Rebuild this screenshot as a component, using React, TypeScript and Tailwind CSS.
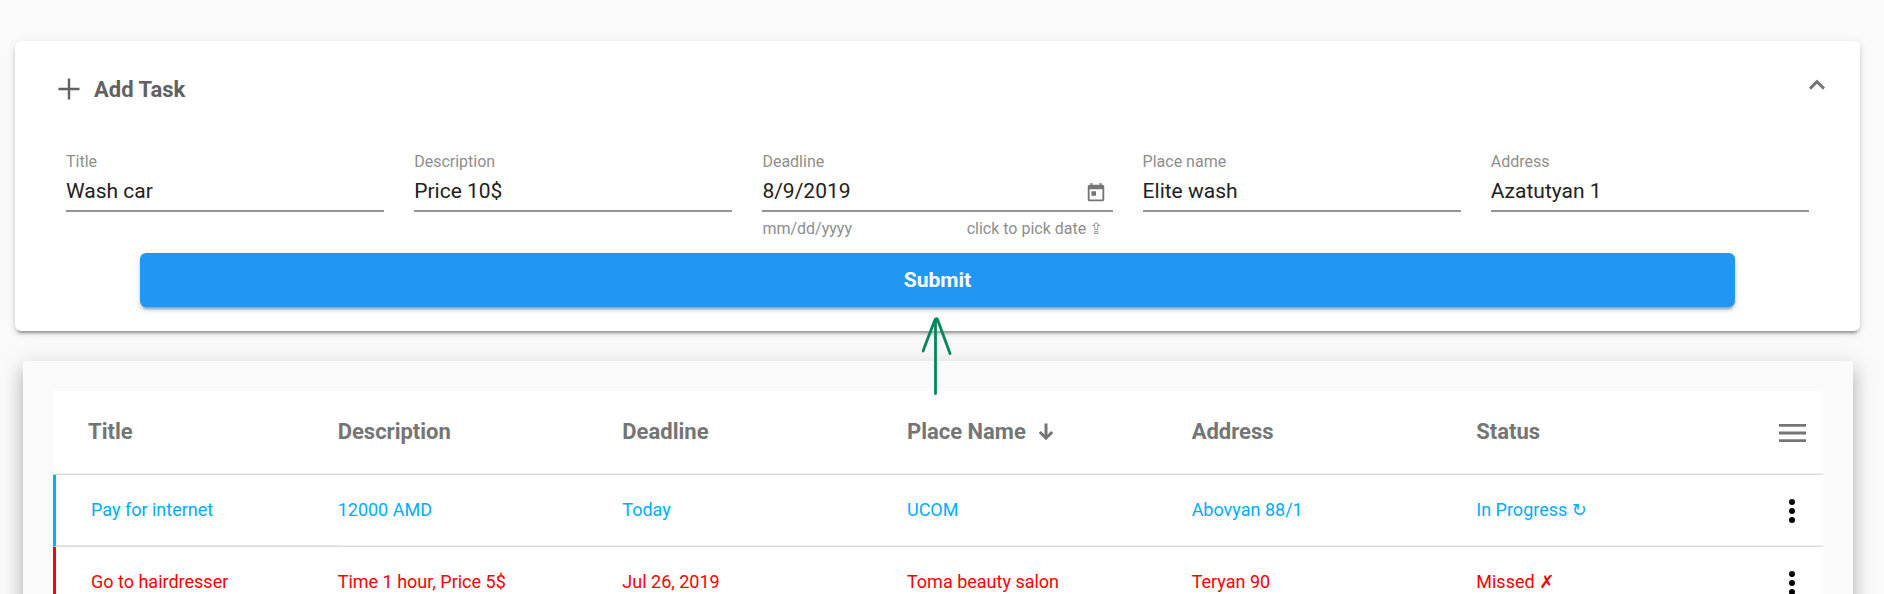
import type { ReactNode } from "react";
import { MdToday } from "react-icons/md";

type Tone = "progress" | "missed";

interface Task {
  title: string;
  description: string;
  deadline: string;
  place: string;
  address: string;
  status: string;
  mark: string;
  tone: Tone;
}

const tasks: Task[] = [
  {
    title: "Pay for internet",
    description: "12000 AMD",
    deadline: "Today",
    place: "UCOM",
    address: "Abovyan 88/1",
    status: "In Progress",
    mark: "↻",
    tone: "progress",
  },
  {
    title: "Go to hairdresser",
    description: "Time 1 hour, Price 5$",
    deadline: "Jul 26, 2019",
    place: "Toma beauty salon",
    address: "Teryan 90",
    status: "Missed",
    mark: "✗",
    tone: "missed",
  },
];

const toneText: Record<Tone, string> = {
  progress: "text-[#00adff]",
  missed: "text-[#ff0000]",
};

const toneEdge: Record<Tone, string> = {
  progress: "border-l-[#00b0ff]",
  missed: "border-l-[#ff0000]",
};

const markWeight: Record<Tone, string> = {
  progress: "font-normal",
  missed: "font-bold",
};

interface FieldProps {
  id: string;
  label: string;
  value: string;
  action?: ReactNode;
  hint?: ReactNode;
}

function Field({ id, label, value, action, hint }: FieldProps) {
  return (
    <div className="min-w-0">
      <label htmlFor={id} className="block text-[16px] leading-5 text-[#8e8e8e]">
        {label}
      </label>
      <div className="flex h-10 items-center border-b-2 border-[#949494]">
        <input
          id={id}
          type="text"
          defaultValue={value}
          className="w-full min-w-0 bg-transparent text-[21px] leading-6 text-[#212121] outline-none"
        />
        {action}
      </div>
      {hint}
    </div>
  );
}

function AddTaskCard() {
  return (
    <section className="relative rounded-md bg-white px-[51px] pb-6 pt-[34px] shadow-[0_5px_2px_-3px_rgba(0,0,0,0.2),0_3px_3px_0_rgba(0,0,0,0.14),0_2px_8px_0_rgba(0,0,0,0.12)]">
      <header className="-ml-2 -mr-4 flex h-7 items-center justify-between">
        <h2 className="flex items-center gap-3.5 text-[22px] font-bold text-[#616161]">
          <svg viewBox="0 0 22 22" className="size-[22px]" fill="none" stroke="#616161" strokeWidth="2.4" aria-hidden="true">
            <path d="M11 0.5V21.5M0.5 11H21.5" />
          </svg>
          Add Task
        </h2>
        <button type="button" aria-label="Collapse" className="-mt-2.5">
          <svg viewBox="0 0 16 11" className="h-[11px] w-4" fill="none" stroke="#757575" strokeWidth="3" aria-hidden="true">
            <path d="M1 9.6L8 2.6L15 9.6" />
          </svg>
        </button>
      </header>

      <form onSubmit={(event) => event.preventDefault()}>
        <div className="mt-[49px] grid grid-cols-[318fr_318fr_350fr_318fr_318fr] gap-x-[30px]">
          <Field id="title" label="Title" value="Wash car" />
          <Field id="description" label="Description" value="Price 10$" />
          <Field
            id="deadline"
            label="Deadline"
            value="8/9/2019"
            action={
              <button type="button" aria-label="Pick date" className="mr-1.5 pt-1 text-[#757575]">
                <MdToday size={22} />
              </button>
            }
            hint={
              <div className="mt-[7px] flex h-5 justify-between pr-2.5 text-[16px] leading-5 text-[#8e8e8e]">
                <span>mm/dd/yyyy</span>
                <span className="flex gap-[3px]">
                  click to pick date <span>⇪</span>
                </span>
              </div>
            }
          />
          <Field id="place" label="Place name" value="Elite wash" />
          <Field id="address" label="Address" value="Azatutyan 1" />
        </div>

        <div className="relative mx-[74px] mt-3.5">
          <button
            type="submit"
            className="h-[54px] w-full rounded-md bg-[#2196f3] pt-0.5 text-[21px] font-bold text-white shadow-[0_5px_2px_-3px_rgba(0,0,0,0.2),0_3px_3px_0_rgba(0,0,0,0.14),0_2px_8px_0_rgba(0,0,0,0.12)]"
          >
            Submit
          </button>
          <svg
            viewBox="0 0 32 80"
            className="pointer-events-none absolute left-1/2 top-full z-10 mt-2 h-20 w-8 -translate-x-1/2"
            fill="none"
            stroke="#00875a"
            strokeWidth="2.8"
            strokeLinecap="round"
            strokeLinejoin="round"
            aria-hidden="true"
          >
            <path d="M13.500 78.500V5" />
            <path d="M1 36L12.500 6Q14 2.500 15.500 4.500L28 38.500" />
          </svg>
        </div>
      </form>
    </section>
  );
}

const line = "border-b border-b-[#dedede] shadow-[inset_0_-1px_#efefef]";

function TaskTable() {
  return (
    <section className="ml-2 mr-[7px] mt-[30px] bg-[#fafafa] p-[30px] shadow-[0_8px_8px_-5px_rgba(0,0,0,0.2),0_12px_15px_2px_rgba(0,0,0,0.14),0_5px_21px_3px_rgba(0,0,0,0.12)]">
      <table className="w-full table-fixed border-separate border-spacing-0 bg-white text-left">
        <colgroup>
          <col />
          <col />
          <col />
          <col />
          <col />
          <col />
          <col className="w-[62px]" />
        </colgroup>
        <thead>
          <tr className="h-[84px] text-[22px] text-[#757575]">
            <th className={`${line} pb-0.5 pl-[35px] font-bold`}>Title</th>
            <th className={`${line} pb-0.5 font-bold`}>Description</th>
            <th className={`${line} pb-0.5 font-bold`}>Deadline</th>
            <th className={`${line} pb-0.5 font-bold`}>
              <button type="button" className="flex items-center gap-3">
                Place Name
                <svg viewBox="0 0 16 18" className="h-[18px] w-4" fill="none" stroke="#757575" strokeWidth="3" aria-hidden="true">
                  <path d="M8 0.500V15M1.800 9L8 15.200L14.200 9" />
                </svg>
              </button>
            </th>
            <th className={`${line} pb-0.5 font-bold`}>Address</th>
            <th className={`${line} pb-0.5 font-bold`}>Status</th>
            <th className={line}>
              <button type="button" aria-label="Table menu" className="ml-[18px] block">
                <svg viewBox="0 0 27 18" className="h-[18px] w-[27px]" fill="#757575" aria-hidden="true">
                  <path d="M0 0H27V2.800H0ZM0 7.600H27V10.400H0ZM0 15.200H27V18H0Z" />
                </svg>
              </button>
            </th>
          </tr>
        </thead>
        <tbody>
          {tasks.map((task) => (
            <tr key={task.title} className={`h-[72px] text-[18px] ${toneText[task.tone]}`}>
              <td className={`border-b border-l-[3px] border-b-[#dedede] pb-0.5 pl-[35px] shadow-[inset_0_-1px_#e4e4e4] ${toneEdge[task.tone]}`}>
                {task.title}
              </td>
              <td className={`${line} pb-0.5`}>{task.description}</td>
              <td className={`${line} pb-0.5`}>{task.deadline}</td>
              <td className={`${line} pb-0.5`}>{task.place}</td>
              <td className={`${line} pb-0.5`}>{task.address}</td>
              <td className={`${line} pb-0.5`}>
                {task.status} <span className={markWeight[task.tone]}>{task.mark}</span>
              </td>
              <td className={line}>
                <button type="button" aria-label={`Actions for ${task.title}`} className="ml-7 block">
                  <svg viewBox="0 0 6 24" className="h-6 w-1.5" fill="#000" aria-hidden="true">
                    <circle cx="3" cy="3" r="3" />
                    <circle cx="3" cy="12" r="3" />
                    <circle cx="3" cy="21" r="3" />
                  </svg>
                </button>
              </td>
            </tr>
          ))}
        </tbody>
      </table>
    </section>
  );
}

export default function App() {
  return (
    <main className="h-screen overflow-hidden bg-[#fafafa] pl-[15px] pr-6 pt-[41px] font-['Roboto','DejaVu_Sans',sans-serif]">
      <AddTaskCard />
      <TaskTable />
    </main>
  );
}
